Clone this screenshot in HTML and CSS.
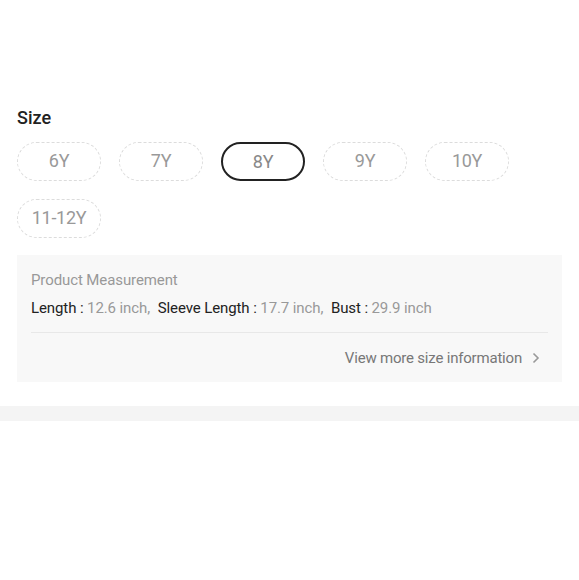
FILE: index.html
```html
<!DOCTYPE html>
<html lang="en">
<head>
  <meta charset="UTF-8" />
  <meta name="viewport" content="width=device-width, initial-scale=1.0"/>
  <title>Size</title>
  <link rel="stylesheet" href="styles.css">
</head>
<body>
  <div class="size-section">
    <div class="size-title">Size</div>

    <div class="size-list">
      <div class="size-pill">6Y</div>
      <div class="size-pill">7Y</div>
      <div class="size-pill selected">8Y</div>
      <div class="size-pill">9Y</div>
      <div class="size-pill">10Y</div>
      <div class="size-pill">11-12Y</div>
    </div>

    <!-- Measurement box -->
    <div class="measure-box">
      <div class="measure-head">Product Measurement</div>
      <div class="measure-values">
        <span class="label">Length : </span><span class="value">12.6 inch,</span>
        <span class="label">Sleeve Length : </span><span class="value">17.7 inch,</span>
        <span class="label">Bust : </span><span class="value">29.9 inch</span>
      </div>
      <div class="measure-more">
        <span>View more size information</span>
        <svg class="chevron" width="8" height="12" viewBox="0 0 8 12">
          <path d="M1.5 1.5 L6 6 L1.5 10.5" fill="none" stroke="#999" stroke-width="1.6"/>
        </svg>
      </div>
    </div>
  </div>

  <div class="divider-band"></div>
</body>
</html>
```

FILE: styles.css
```css
body {
  margin: 0;
  padding: 0;
  background-color: #fff;
  font-family: Roboto, "Liberation Sans", sans-serif;
  color: #222;
}

.size-section {
  padding: 106px 17px 24px 17px;
}

.size-title {
  font-size: 18px;
  line-height: 24px;
  font-weight: 500;
  color: #222;
  margin-bottom: 12px;
}

.size-list {
  display: flex;
  flex-wrap: wrap;
  gap: 18px;
}

.size-pill {
  box-sizing: border-box;
  width: 84px;
  height: 39px;
  line-height: 36px;
  text-align: center;
  font-size: 18px;
  letter-spacing: -0.3px;
  color: #999;
  border: 1.5px dashed #dcdcdc;
  border-radius: 20px;
}

.size-pill.selected {
  border: 2px solid #222;
  line-height: 35px;
  color: #888;
}

.measure-box {
  margin-top: 17px;
  background-color: #f8f8f8;
  padding: 14px 14px 0 14px;
}

.measure-head {
  font-size: 15px;
  line-height: 22px;
  letter-spacing: -0.1px;
  color: #999;
}

.measure-values {
  margin-top: 6px;
  font-size: 15px;
  line-height: 22px;
  letter-spacing: -0.1px;
  padding-bottom: 13px;
  border-bottom: 1px solid #e8e8e8;
}

.measure-values .label {
  color: #222;
}

.measure-values .value {
  color: #999;
  margin-right: 4px;
}

.measure-more {
  display: flex;
  justify-content: flex-end;
  align-items: center;
  gap: 10px;
  padding: 14px 8px 13px 0;
  font-size: 15px;
  letter-spacing: -0.2px;
  line-height: 22px;
  color: #777;
}

.divider-band {
  height: 15px;
  background-color: #f4f4f4;
}
```
